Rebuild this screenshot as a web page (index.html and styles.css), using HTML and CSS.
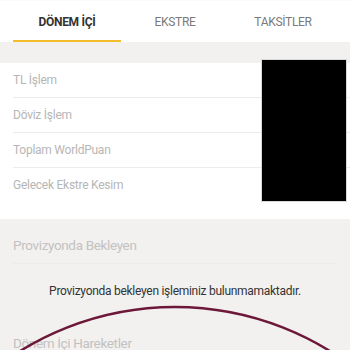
FILE: index.html
```html
<!DOCTYPE html>
<html lang="tr">
<head>
<meta charset="utf-8">
<link rel="stylesheet" href="styles.css">
</head>
<body>
<div class="page">
  <div class="tabs">
    <div class="tab active">DÖNEM İÇİ</div>
    <div class="tab">EKSTRE</div>
    <div class="tab">TAKSİTLER</div>
  </div>
  <div class="gap"></div>
  <div class="summary">
    <div class="row">TL İşlem</div>
    <div class="row">Döviz İşlem</div>
    <div class="row">Toplam WorldPuan</div>
    <div class="row last">Gelecek Ekstre Kesim</div>
    <div class="mask"></div>
  </div>
  <div class="section">
    <div class="section-title">Provizyonda Bekleyen</div>
    <div class="empty">Provizyonda bekleyen işleminiz bulunmamaktadır.</div>
    <div class="section-title second">Dönem İçi Hareketler</div>
  </div>
  <svg class="arc" width="350" height="350" viewBox="0 0 350 350">
    <circle cx="175" cy="601" r="294" fill="none" stroke="#6d1838" stroke-width="2.5"/>
  </svg>
</div>
</body>
</html>
```
FILE: styles.css
```css
html, body {
  margin: 0;
  padding: 0;
  background: #f2f1f0;
}
body {
  font-family: Roboto, "Noto Sans", Arial, sans-serif;
  width: 350px;
  height: 350px;
  overflow: hidden;
}
.page {
  position: relative;
  width: 350px;
  height: 350px;
  overflow: hidden;
}
.tabs {
  display: flex;
  background: #fff;
  padding: 0 13px;
  height: 42px;
  border-top: 1px solid #fafafa;
  box-sizing: border-box;
}
.tab {
  flex: 1;
  display: flex;
  align-items: center;
  justify-content: center;
  font-size: 12px;
  letter-spacing: -0.3px;
  color: #7a7a7a;
  box-sizing: border-box;
  border-bottom: 2px solid transparent;
  padding-top: 2px;
}
.tab.active {
  color: #333;
  font-weight: 700;
  border-bottom-color: #f2be2c;
}
.gap {
  height: 21px;
  background: #f2f1f0;
}
.summary {
  position: relative;
  background: #fff;
  padding-left: 13px;
  padding-bottom: 16px;
}
.row {
  height: 35px;
  line-height: 35px;
  font-size: 12px;
  letter-spacing: -0.25px;
  color: #b6b6b6;
  border-bottom: 1px solid #ececec;
  box-sizing: border-box;
}
.row.last {
  border-bottom: none;
}
.mask {
  position: absolute;
  left: 262px;
  top: -3px;
  width: 84px;
  height: 141px;
  background: #000;
  box-shadow: 0 0 0 1px #d8d8d8;
}
.section {
  padding: 0 13px;
}
.section-title {
  height: 44px;
  line-height: 53px;
  font-size: 13.5px;
  letter-spacing: -0.35px;
  color: #c3c2c1;
  border-bottom: 1px solid #ecebea;
}
.section-title.second {
  border-bottom: none;
  line-height: 50px;
}
.empty {
  height: 54px;
  line-height: 54px;
  text-align: center;
  font-size: 12px;
  letter-spacing: -0.28px;
  color: #333;
  margin: 0 -13px;
}
.arc {
  position: absolute;
  left: 0;
  top: 0;
  pointer-events: none;
}
```
